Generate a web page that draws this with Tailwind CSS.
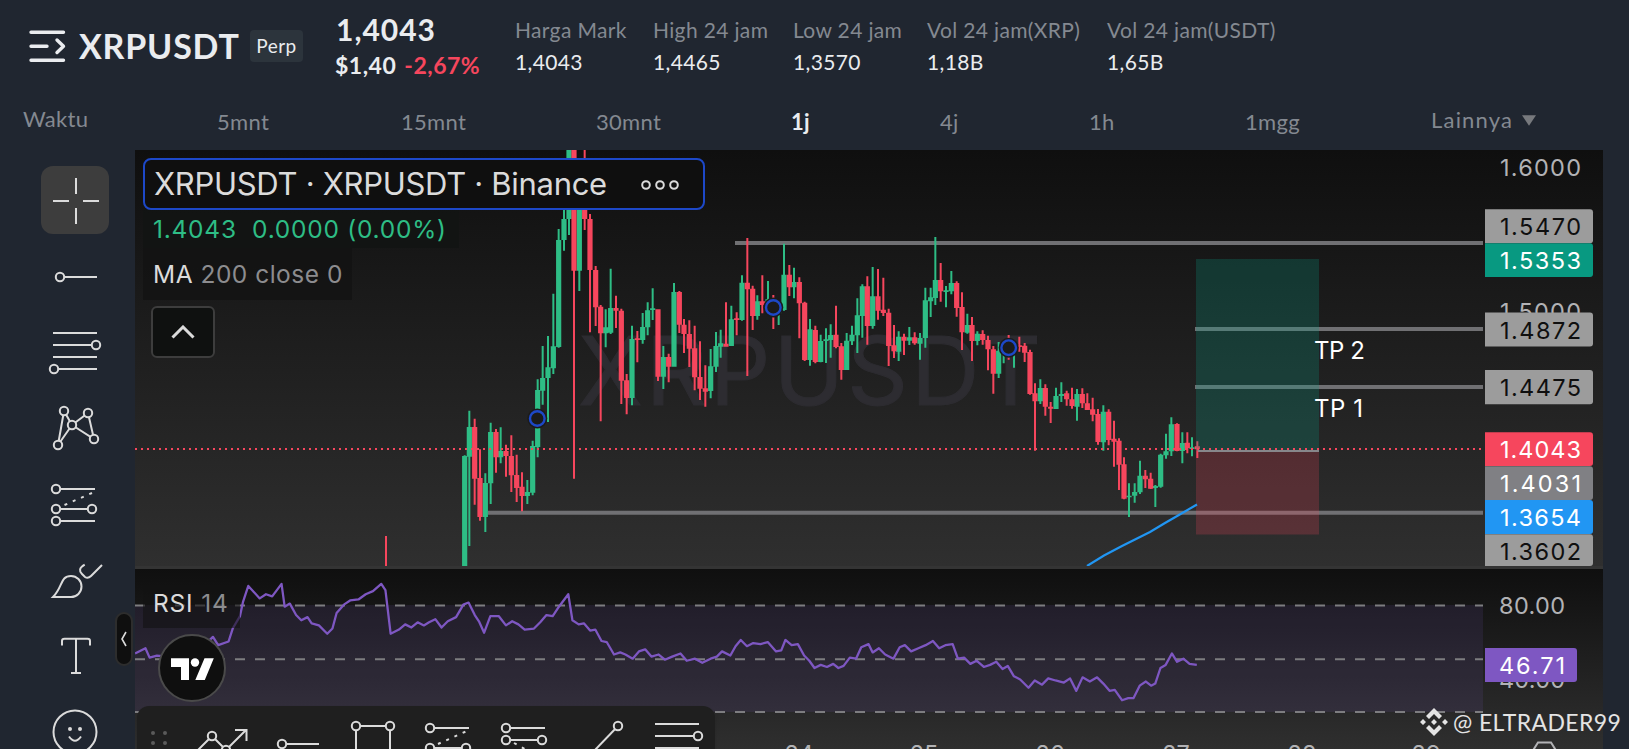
<!DOCTYPE html>
<html lang="id">

<head>
    <meta charset="UTF-8">
    <meta name="viewport" content="width=device-width, initial-scale=1.0">
    <title>XRPUSDT Perp</title>
    <script src="https://cdn.jsdelivr.net/npm/@tailwindcss/browser@4"></script>
</head>

<body class="w-[1629px] h-[749px] overflow-hidden bg-[#202630] text-[#eaecef] font-['Lato',sans-serif] flex flex-col">
    <!-- Header -->
    <header class="h-[96px] shrink-0 flex items-start whitespace-nowrap">
        <svg class="w-[38px] h-[38px] ml-[28px] mt-[27px]" viewBox="28 27 38 38" fill="none" stroke="#eaecef"
            stroke-width="3.4" stroke-linecap="round" stroke-linejoin="round">
            <path d="M31 32.3H63.500M31 46.300H47M31 60.300H63.500M57 40L63.500 46.300L57 52.500" />
        </svg>
        <h1 class="ml-[13px] mt-[24px] w-[171px] text-[34px] leading-[44px] font-bold tracking-[0.8px]">XRPUSDT</h1>
        <span class="mt-[30px] w-[53px] h-[32px] rounded bg-[#2c343c] text-center text-[19px] leading-[31px] tracking-[0.5px]">Perp</span>
        <div class="ml-[33px] w-[179px]">
            <div class="mt-[10px] text-[30px] leading-[38px] font-bold tracking-[1px]">1,4043</div>
            <div class="-ml-px text-[23px] leading-[35px] font-bold tracking-[0.5px]">$1,40 <span class="ml-[2px] text-[#f6465d]">-2,67%</span></div>
        </div>
        <dl class="flex mt-[16px] text-[21px] leading-[28px] tracking-[0.35px]">
            <div class="w-[138px]">
                <dt class="text-[#848991]">Harga Mark</dt>
                <dd class="mt-1">1,4043</dd>
            </div>
            <div class="w-[140px]">
                <dt class="text-[#848991]">High 24 jam</dt>
                <dd class="mt-1">1,4465</dd>
            </div>
            <div class="w-[134px]">
                <dt class="text-[#848991]">Low 24 jam</dt>
                <dd class="mt-1">1,3570</dd>
            </div>
            <div class="w-[180px]">
                <dt class="text-[#848991]">Vol 24 jam(XRP)</dt>
                <dd class="mt-1">1,18B</dd>
            </div>
            <div>
                <dt class="text-[#848991]">Vol 24 jam(USDT)</dt>
                <dd class="mt-1">1,65B</dd>
            </div>
        </dl>
    </header>

    <!-- Timeframes -->
    <nav class="h-[54px] shrink-0 flex items-start pl-[23px] text-[22px] leading-[28px] tracking-[0.3px] text-[#848991] whitespace-nowrap">
        <span class="w-[194px] mt-[9px]">Waktu</span>
        <span class="w-[184px] mt-[12px]">5mnt</span>
        <span class="w-[195px] mt-[12px]">15mnt</span>
        <span class="w-[195px] mt-[12px]">30mnt</span>
        <span class="w-[149px] mt-[12px] font-bold text-[#eaecef]">1j</span>
        <span class="w-[149px] mt-[12px]">4j</span>
        <span class="w-[156px] mt-[12px]">1h</span>
        <span class="w-[186px] mt-[12px]">1mgg</span>
        <span class="w-[91px] mt-[10px] tracking-[1.2px]">Lainnya</span>
        <svg class="w-[14px] h-[11px] mt-[19px]" viewBox="0 0 15 11" fill="#77797d"><path d="M0 0H15L7.500 11Z" /></svg>
    </nav>

    <main class="flex h-[599px] shrink-0">
        <!-- Drawing tools -->
        <aside class="relative w-[135px] shrink-0 pt-[13px] pl-[37px] flex flex-col overflow-hidden">
            <svg class="w-[76px] h-[76px] shrink-0" viewBox="37 163 76 76" fill="none" stroke="#dbdbdb" stroke-width="2">
                <rect x="41" y="166" width="68" height="68" rx="12" fill="#3d3d3d" stroke="none" />
                <path d="M76 178V194M76 208V224M53 201H69M83 201H99" />
            </svg>
            <svg class="w-[76px] h-[76px] shrink-0" viewBox="37 239 76 76" fill="none" stroke="#dbdbdb" stroke-width="2">
                <circle cx="60" cy="277" r="4.200" />
                <path d="M64 277H97" />
            </svg>
            <svg class="w-[76px] h-[76px] shrink-0" viewBox="37 315 76 76" fill="none" stroke="#dbdbdb" stroke-width="2">
                <path d="M53 333H97M53 345H92M53 357H97M58 369H97" />
                <circle cx="96" cy="345" r="4.200" />
                <circle cx="54" cy="369" r="4.200" />
            </svg>
            <svg class="w-[76px] h-[76px] shrink-0" viewBox="37 391 76 76" fill="#202630" stroke="#dbdbdb" stroke-width="2">
                <path fill="none" d="M64 411L58 445L72 425ZM72 425L88 413L94 439Z" />
                <circle cx="64" cy="411" r="4.200" />
                <circle cx="88" cy="413" r="4.200" />
                <circle cx="72" cy="425" r="4.200" />
                <circle cx="94" cy="439" r="4.200" />
                <circle cx="58" cy="445" r="4.200" />
            </svg>
            <svg class="w-[76px] h-[76px] shrink-0" viewBox="37 467 76 76" fill="none" stroke="#dbdbdb" stroke-width="2">
                <path d="M60 489H95M60 509H88M60 521H95" />
                <path d="M64.500 505L92 493" stroke-dasharray="3 6" />
                <circle cx="56" cy="489" r="4.200" />
                <circle cx="56" cy="509" r="4.200" />
                <circle cx="92" cy="509" r="4.200" />
                <circle cx="56" cy="521" r="4.200" />
            </svg>
            <svg class="w-[76px] h-[76px] shrink-0" viewBox="37 543 76 76" fill="none" stroke="#dbdbdb" stroke-width="2">
                <path d="M53 597C63 587 60 576 71 576A10.500 10.500 0 0 1 71 597Z" />
                <path d="M84.700 564.700C79 568 79 571 82 574L85 577Q88 579 91 576L102 565" />
            </svg>
            <svg class="w-[76px] h-[76px] shrink-0" viewBox="37 619 76 76" fill="none" stroke="#dbdbdb" stroke-width="2">
                <path d="M62 645.500V641Q62 638.700 64.500 638.700H87.500Q90 638.700 90 641V645.500M76 639V673M71 673H81" />
            </svg>
            <svg class="w-[76px] h-[76px] shrink-0" viewBox="37 695 76 76" fill="none" stroke="#dbdbdb" stroke-width="2">
                <circle cx="75" cy="732" r="21.500" />
                <path d="M69 736.500Q75 745 81 736.500" />
                <circle cx="70" cy="729" r="2" fill="#dbdbdb" stroke="none" />
                <circle cx="80" cy="729" r="2" fill="#dbdbdb" stroke="none" />
            </svg>
            <!-- Collapse handle -->
            <button class="absolute left-[115px] top-[462px] w-[18px] h-[54px] rounded-[9px] bg-[#0f0f0f] border-2 border-[#2d2d2d] flex items-center justify-center">
                <svg class="w-[6px] h-[16px]" viewBox="0 0 6 16" fill="none" stroke="#dbdbdb" stroke-width="1.600"><path d="M5 1L1 8L5 15" /></svg>
            </button>
        </aside>

        <!-- Chart -->
        <section class="relative w-[1468px] h-[599px] overflow-hidden font-['Inter',sans-serif]">
            <svg id="chart" class="block w-[1468px] h-[599px]" viewBox="135 150 1468 599">
                <defs>
                    <linearGradient id="priceBg" x1="0" y1="0" x2="0" y2="1">
                        <stop offset="0" stop-color="#0f0f0f" />
                        <stop offset="1" stop-color="#2f2f2f" />
                    </linearGradient>
                    <clipPath id="pricePane"><rect x="135" y="150" width="1468" height="416" /></clipPath>
                </defs>
                <rect x="135" y="150" width="1468" height="416" fill="url(#priceBg)" />
                <rect x="135" y="566" width="1468" height="3" fill="#343434" />
                <rect x="135" y="569" width="1468" height="180" fill="url(#priceBg)" />
                <text x="578" y="404.500" font-size="95" textLength="463" fill="#2d2c31" stroke="#2d2c31">XRPUSDT</text>

                <g clip-path="url(#pricePane)">
                    <g stroke="#707073" stroke-width="4">
                        <path d="M735 243H1483M1195 329H1483M1195 387H1483M488 512.700H1483" />
                    </g>
                    <path id="up" fill="#2ebd85" />
                    <path id="down" fill="#f6465d" />
                    <rect x="1196" y="259" width="123" height="192" fill="#089981" fill-opacity="0.250" />
                    <rect x="1196" y="451" width="123" height="83.500" fill="#f6465d" fill-opacity="0.220" />
                    <path d="M1198 451H1319" stroke="#87878b" stroke-width="2" />
                    <path d="M1087 566L1104 555.500L1122 546L1150 532L1165 523L1178 515.500L1197 504.500" fill="none" stroke="#2196f3" stroke-width="2.200" />
                    <path d="M135 449H1483" stroke="#f6465d" stroke-width="2" stroke-dasharray="2 4" />
                    <g fill="#1b1b1b" stroke="#1d48c8" stroke-width="2.400">
                        <circle cx="537.300" cy="418.500" r="10" stroke="none" />
                        <circle cx="537.300" cy="418.500" r="7.300" />
                        <circle cx="773.300" cy="307.500" r="10" stroke="none" />
                        <circle cx="773.300" cy="307.500" r="7.300" />
                        <circle cx="1008.700" cy="347.700" r="10" stroke="none" />
                        <circle cx="1008.700" cy="347.700" r="7.300" />
                    </g>
                    <g fill="#ffffff" font-size="24">
                        <text x="1314" y="358.500" textLength="51">TP 2</text>
                        <text x="1314" y="416.500" textLength="49">TP 1</text>
                    </g>
                </g>

                <!-- RSI pane -->
                <rect x="135" y="605" width="1348" height="107" fill="#7e57c2" fill-opacity="0.120" />
                <path d="M135 605.500H1483M135 659.300H1483M135 712H1483" stroke="#7d7d80" stroke-width="2" stroke-dasharray="10 10" />
                <polyline id="rsi" fill="none" stroke="#7e57c2" stroke-width="2.200" stroke-linejoin="round" transform="scale(1.0389)" />

                <!-- Time scale, cut off by the viewport -->
                <g font-size="23.500" fill="#b2b2b5" text-anchor="middle">
                    <text x="799" y="762">24</text>
                    <text x="924" y="762">25</text>
                    <text x="1050" y="762">26</text>
                    <text x="1176" y="762">27</text>
                    <text x="1302" y="762">28</text>
                    <text x="1426" y="762">29</text>
                </g>
                <path d="M1532 752L1538 742.500H1551L1557 752" fill="none" stroke="#b2b2b5" stroke-width="2" />

                <!-- Price scale -->
                <g id="scale" font-size="23.500"></g>

                <circle cx="192" cy="668" r="33" fill="#0f0f0f" stroke="#4a4a4a" stroke-width="2" />
                <path fill="#ffffff" d="M171 658.300H189V680H181V667H171ZM204.500 658.300H213.800L204.800 680H195.300Z" />
                <circle cx="195" cy="662.500" r="4.200" fill="#ffffff" />
            </svg>

            <!-- Legend -->
            <div class="absolute left-[8px] top-[8px] flex flex-col items-start whitespace-nowrap text-[#dbdbdb]">
                <div class="w-[562px] h-[52px] rounded-lg border-2 border-[#1d48c8] bg-[#0f0f0f] flex items-center pl-[9px] text-[31px] tracking-[-0.3px]">
                    <span class="w-[486px]">XRPUSDT · XRPUSDT · Binance</span>
                    <svg class="w-[40px] h-[12px] mt-[2px]" viewBox="0 0 40 12" fill="none" stroke="#dbdbdb" stroke-width="2">
                        <circle cx="6" cy="6" r="3.800" /><circle cx="20" cy="6" r="3.800" /><circle cx="34" cy="6" r="3.800" />
                    </svg>
                </div>
                <div class="w-[316px] h-[38px] pl-[10px] bg-[#121413]/80 text-[24.500px] leading-[38px] tracking-[0.750px] text-[#2ebd85]">1.4043&nbsp; 0.0000 (0.00%)</div>
                <div class="w-[209px] h-[52px] pl-[10px] bg-[#131313]/80 text-[24.500px] leading-[52px] tracking-[0.5px]">MA <span class="text-[#8c8c8f]">200 close 0</span></div>
                <button class="ml-[8px] mt-[6px] w-[64px] h-[52px] rounded-md border-2 border-[#3d3d3d] bg-[#0f1110] flex items-center justify-center">
                    <svg class="w-[24px] h-[14px]" viewBox="0 0 24 14" fill="none" stroke="#dbdbdb" stroke-width="3"><path d="M1.500 12.500L12 2L22.500 12.500" /></svg>
                </button>
            </div>
            <div class="absolute left-[8px] top-[434px] w-[97px] h-[44px] pl-[10px] bg-[#131313]/60 text-[24.500px] leading-[38px] tracking-[0.8px] text-[#dbdbdb] whitespace-nowrap">RSI <span class="text-[#8c8c8f]">14</span></div>

            <!-- Favourite tools bar -->
            <div class="absolute left-[2px] top-[556px] w-[578px] h-[60px] rounded-xl bg-[#1f1f1f] shadow-md">
                <svg class="block w-[578px] h-[43px]" viewBox="137 706 578 43" fill="#1f1f1f" stroke="#dbdbdb" stroke-width="2">
                    <g fill="#5a5a5a" stroke="none">
                        <circle cx="153" cy="733" r="2" /><circle cx="165" cy="733" r="2" />
                        <circle cx="153" cy="743" r="2" /><circle cx="165" cy="743" r="2" />
                    </g>
                    <path fill="none" d="M198 750L212 736L226 750L246 730M235 730H246.500V741" />
                    <circle cx="212" cy="736" r="4.200" /><circle cx="226" cy="750" r="4.200" />
                    <path d="M286 744H319" /><circle cx="282" cy="744" r="4.200" />
                    <path d="M356 726H390M356 730V750M390 730V750" /><circle cx="356" cy="726" r="4.200" /><circle cx="390" cy="726" r="4.200" />
                    <path d="M434 728H469M434 748H462" /><path d="M438 744L467 731" stroke-dasharray="3 6" />
                    <circle cx="430" cy="728" r="4.200" /><circle cx="430" cy="748" r="4.200" /><circle cx="466" cy="748" r="4.200" />
                    <path d="M510 728H545M510 740H538" /><path d="M514 743L530 752" stroke-dasharray="3 6" />
                    <circle cx="506" cy="728" r="4.200" /><circle cx="506" cy="740" r="4.200" /><circle cx="542" cy="740" r="4.200" />
                    <path d="M595 750L618 726" /><circle cx="618" cy="726" r="4.200" />
                    <path d="M655 724H699M655 736H694M655 748H699" /><circle cx="698" cy="736" r="4.200" />
                </svg>
            </div>
        </section>
    </main>

    <!-- Author credit over the chart corner -->
    <div class="absolute left-[1420px] top-[705px] flex items-center gap-[5px] text-[23px] tracking-[0.4px] text-[#e4e4e4] font-['Lato',sans-serif] whitespace-nowrap">
        <svg class="w-[28px] h-[28px]" viewBox="0 0 28 28" fill="#e4e4e4">
            <path d="M14 0L22 8L19 11L14 6L9 11L6 8ZM3 11L6 14L3 17L0 14ZM25 11L28 14L25 17L22 14ZM14 11L17 14L14 17L11 14ZM9 17L14 22L19 17L22 20L14 28L6 20Z" />
        </svg>
        <span>@ ELTRADER99</span>
    </div>

    <script>
        // Candles grouped by chart segment. Units are thirds of a pixel from the segment origin:
        // [x, high, low, bodyTop, bodyBottom, up]
        const segments = [
            { x: 360, y: 370, candles: [
                [78, 498, 600, 590, 600, 0], [314, 256, 600, 258, 600, 1], [328, 122, 528, 171, 260, 1], [344, 146, 404, 171, 326, 0],
                [360, 238, 452, 324, 441, 0], [376, 310, 486, 339, 441, 1], [392, 158, 402, 186, 340, 1], [408, 177, 308, 186, 262, 0],
                [422, 172, 280, 243, 262, 1], [438, 224, 320, 243, 258, 0], [454, 196, 366, 258, 316, 0], [470, 254, 396, 315, 354, 0],
                [486, 307, 424, 350, 378, 0], [502, 330, 402, 366, 378, 1], [518, 212, 376, 228, 368, 1], [533, 28, 262, 60, 231, 1],
                [548, -72, 104, 24, 62, 1], [564, -102, 156, -8, 24, 1], [580, -229, 12, -71, -5, 1], [596, -423, -67, -390, -69, 1],
                [612, -483, -358, -453, -390, 1], [627, -700, -405, -700, -453, 1], [642, -700, 326, -700, -298, 0],
                [658, -600, -237, -600, -298, 1], [674, -700, -420, -600, -453, 0], [690, -468, -113, -453, -300, 0]
            ] },
            { x: 560, y: 200, candles: [
                [107, 198, 378, 210, 322, 0], [122, 315, 664, 320, 400, 0], [137, 328, 442, 382, 400, 1], [152, 206, 402, 324, 398, 1],
                [168, 287, 384, 324, 332, 0], [184, 326, 612, 332, 542, 0], [200, 522, 643, 541, 594, 0], [216, 377, 616, 417, 594, 1],
                [232, 393, 487, 415, 420, 0], [248, 339, 431, 381, 420, 1], [263, 307, 406, 331, 382, 1], [278, 265, 360, 325, 330, 1],
                [294, 328, 543, 328, 530, 0], [310, 438, 567, 471, 530, 1], [326, 461, 547, 471, 500, 0], [342, 249, 500, 276, 500, 1],
                [358, 273, 399, 276, 374, 0], [372, 357, 459, 374, 402, 0], [388, 361, 501, 402, 446, 0], [404, 377, 571, 445, 532, 0],
                [420, 424, 600, 531, 566, 0], [436, 496, 620, 565, 575, 0], [452, 447, 595, 499, 573, 1], [468, 396, 516, 438, 500, 1],
                [482, 389, 473, 430, 440, 1], [498, 307, 440, 431, 440, 0], [514, 317, 438, 358, 438, 1], [530, 337, 406, 355, 360, 0],
                [546, 226, 362, 248, 360, 1], [562, 114, 528, 248, 268, 0], [578, 257, 390, 266, 348, 0], [592, 286, 359, 304, 348, 1],
                [607, 226, 340, 304, 315, 0], [624, 243, 330, 298, 315, 1], [640, 285, 387, 300, 340, 0], [656, 320, 375, 325, 340, 1],
                [672, 131, 332, 224, 330, 1], [688, 195, 288, 224, 262, 0], [702, 203, 295, 246, 262, 1], [718, 232, 415, 246, 310, 0],
                [734, 305, 483, 308, 480, 0], [750, 357, 497, 388, 480, 1], [766, 377, 490, 390, 486, 0], [782, 404, 487, 423, 486, 1],
                [798, 385, 489, 418, 423, 1], [812, 373, 473, 405, 420, 1], [828, 317, 445, 404, 441, 0], [844, 429, 539, 439, 510, 0],
                [860, 399, 510, 422, 510, 1], [876, 377, 435, 404, 424, 1], [892, 295, 459, 346, 406, 1]
            ] },
            { x: 820, y: 220, candles: [
                [127, 193, 353, 199, 288, 1], [142, 169, 374, 199, 318, 0], [158, 141, 326, 229, 318, 1], [174, 147, 299, 229, 272, 0],
                [190, 173, 288, 269, 279, 0], [206, 266, 438, 278, 378, 0], [222, 315, 414, 376, 394, 0], [236, 334, 423, 350, 395, 1],
                [252, 341, 405, 350, 362, 0], [268, 321, 375, 352, 362, 1], [284, 337, 374, 352, 370, 0], [300, 339, 419, 354, 371, 1],
                [316, 203, 383, 241, 354, 1], [332, 203, 291, 232, 244, 1], [346, 51, 255, 180, 234, 1], [362, 129, 245, 180, 214, 0],
                [378, 198, 262, 211, 216, 1], [394, 153, 223, 189, 214, 1], [410, 184, 290, 189, 264, 0], [426, 217, 390, 261, 337, 0],
                [442, 281, 341, 315, 338, 1], [456, 291, 423, 315, 363, 0], [472, 334, 376, 341, 363, 1], [488, 331, 374, 342, 360, 0],
                [504, 347, 451, 360, 388, 0], [520, 378, 521, 388, 461, 0], [536, 366, 474, 392, 461, 1], [551, 370, 430, 380, 395, 1],
                [566, 345, 419, 370, 390, 0], [582, 370, 443, 376, 390, 1], [598, 350, 395, 376, 381, 0], [614, 369, 426, 377, 398, 0],
                [630, 389, 524, 396, 522, 0], [645, 490, 692, 520, 544, 0], [661, 478, 552, 504, 544, 1], [676, 493, 587, 504, 560, 0],
                [692, 546, 609, 560, 566, 0], [708, 503, 567, 528, 567, 1], [724, 487, 546, 522, 528, 1], [740, 512, 557, 520, 538, 0],
                [756, 503, 566, 538, 558, 0], [771, 507, 602, 522, 560, 1], [787, 505, 564, 522, 550, 0], [802, 520, 570, 550, 570, 0],
                [818, 533, 604, 568, 584, 0], [834, 567, 674, 582, 666, 0], [850, 556, 692, 575, 667, 1], [866, 568, 676, 575, 660, 0]
            ] },
            { x: 1040, y: 370, candles: [
                [222, 152, 290, 206, 215, 0], [237, 205, 360, 212, 284, 0], [252, 262, 388, 283, 386, 0], [267, 340, 441, 377, 382, 1],
                [284, 340, 398, 366, 377, 1], [300, 272, 372, 317, 367, 1], [316, 300, 354, 317, 328, 0], [332, 308, 357, 326, 356, 0],
                [346, 345, 411, 348, 354, 1], [362, 251, 353, 254, 350, 1], [378, 191, 266, 244, 256, 1], [394, 142, 258, 163, 244, 1],
                [411, 160, 244, 162, 243, 0], [427, 187, 280, 219, 243, 1], [442, 187, 250, 218, 234, 0], [456, 202, 259, 232, 237, 1],
                [472, 214, 264, 229, 238, 0]
            ] }
        ];

        let up = '';
        let down = '';
        segments.forEach(segment => {
            segment.candles.forEach(([cx, high, low, top, bottom, isUp]) => {
                const x = segment.x + cx / 3;
                const y = v => segment.y + v / 3;
                const shape = `M${x - 1} ${y(high)}H${x + 1}V${y(low)}H${x - 1}ZM${x - 2.6} ${y(top)}H${x + 2.6}V${y(bottom)}H${x - 2.6}Z`;
                if (isUp) up += shape; else down += shape;
            });
        });
        document.getElementById('up').setAttribute('d', up);
        document.getElementById('down').setAttribute('d', down);

        const rsi = [
            [130, 629], [140, 624], [144, 633], [151, 631], [162, 632], [192, 626], [203, 615], [205, 613], [210, 621], [220, 617.5],
            [224, 605], [231, 593], [234, 579], [239, 564], [250, 576], [256, 572], [262, 574], [271, 562], [274, 584], [279, 581],
            [285, 592], [290, 597], [296, 594], [300, 600], [307, 602], [315, 610], [320, 605], [324, 590], [331, 582], [337, 578],
            [345, 577], [352, 572], [359, 569], [367, 562], [371, 568], [376, 610], [384, 606], [390, 601], [396, 604], [402, 599],
            [408, 602], [413, 599], [419, 596], [425, 604], [431, 598], [439, 594], [446, 582], [451, 580], [457, 592], [461, 598],
            [466, 609], [472, 593], [480, 593], [487, 602], [493, 598], [499, 601], [505, 606], [514, 605], [520, 599], [526, 592],
            [532, 593], [538, 584], [547, 572], [551, 597], [557, 601], [562, 600], [568, 607], [573, 606], [579, 617], [584, 618],
            [591, 630], [597, 628], [602, 630], [609, 634], [615, 627], [621, 625], [627, 632], [634, 630], [640, 635], [647, 632],
            [655, 629], [661, 636], [669, 634], [676, 638], [684, 634], [690, 632], [695, 627], [703, 631], [708, 622], [713, 616],
            [719, 622], [725, 619], [732, 620], [739, 618], [747, 627], [752, 626], [756, 616], [762, 621], [768, 620], [774, 631],
            [779, 636], [784, 643], [790, 640], [796, 642], [802, 639], [807, 643], [812, 641], [818, 633], [824, 634], [829, 623],
            [836, 620], [840, 628], [846, 624], [852, 630], [860, 634], [866, 623], [871, 621], [877, 627], [884, 624], [891, 621],
            [898, 617], [904, 624], [910, 621], [917, 620], [922, 634], [928, 633], [934, 639], [940, 636], [947, 642], [953, 640],
            [959, 637], [965, 644], [970, 641], [976, 651], [982, 654], [990, 662], [996, 655], [1003, 659], [1009, 653], [1016, 655],
            [1024, 657], [1030, 653], [1036, 665], [1042, 652], [1049, 656], [1056, 652], [1062, 658], [1068, 665], [1073, 664],
            [1080, 674], [1086, 672], [1091, 672], [1097, 660], [1103, 656], [1108, 660], [1112, 658], [1117, 643], [1122, 640],
            [1128, 629], [1133, 637], [1139, 634], [1145, 639], [1152, 640]
        ];
        document.getElementById('rsi').setAttribute('points', rsi.map(p => p.join(',')).join(' '));

        // [label, baseline, boxTop, boxHeight, background, text colour]
        const labels = [
            ['1.6000', 175.7, 0, 0, '', '#b2b2b5'],
            ['1.5000', 320, 0, 0, '', '#b2b2b5'],
            ['1.5470', 235.2, 209.3, 34, '#9c9c9c', '#0f0f0f'],
            ['1.5353', 269, 243.3, 33.7, '#089981', '#ffffff'],
            ['1.4872', 338.5, 312.5, 34, '#9c9c9c', '#0f0f0f'],
            ['1.4475', 396, 370, 34.3, '#9c9c9c', '#0f0f0f'],
            ['1.4043', 458, 432.3, 33.7, '#f6465d', '#ffffff'],
            ['1.4031', 492, 466.3, 33.7, '#808084', '#ffffff'],
            ['1.3654', 526, 500, 34, '#2196f3', '#ffffff'],
            ['1.3602', 560, 534.3, 31.7, '#9c9c9c', '#0f0f0f'],
            ['80.00', 614, 0, 0, '', '#b2b2b5'],
            ['40.00', 688, 0, 0, '', '#b2b2b5'],
            ['46.71', 673.5, 648, 34, '#7e57c2', '#ffffff']
        ];
        document.getElementById('scale').innerHTML = labels.map(([text, baseline, top, height, bg, color]) => {
            const short = text.length === 5;
            const right = short ? 1577 : 1593;
            const box = bg ? `<path fill="${bg}" d="M1485 ${top}H${right - 3}q3 0 3 3V${top + height - 3}q0 3 -3 3H1485Z" />` : '';
            return `${box}<text x="${short ? 1499 : 1500}" y="${baseline}" textLength="${short ? 66 : 81}" fill="${color}">${text}</text>`;
        }).join('');
    </script>
</body>

</html>
